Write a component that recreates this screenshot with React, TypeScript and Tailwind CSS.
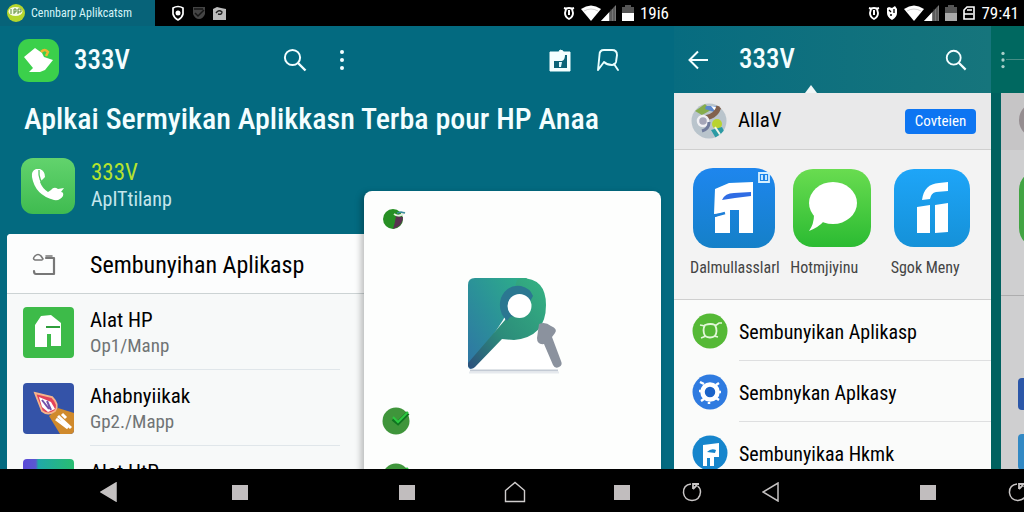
import React from 'react';

type IconProps = { className?: string };

const SearchIcon: React.FC<IconProps> = ({ className }) => (
  <svg
    className={className}
    viewBox="0 0 24 24"
    fill="none"
    stroke="currentColor"
    strokeWidth="2"
  >
    <circle cx="9.5" cy="9.5" r="7.6" />
    <path d="M15 15l7.5 7.5" strokeWidth="2.4" />
  </svg>
);

const DotsIcon: React.FC<IconProps> = ({ className }) => (
  <svg className={className} viewBox="0 0 6 22" fill="currentColor">
    <circle cx="3" cy="3" r="2" />
    <circle cx="3" cy="11" r="2" />
    <circle cx="3" cy="19" r="2" />
  </svg>
);

const SaveIcon: React.FC = () => (
  <svg className="w-6 h-6" viewBox="0 0 24 24">
    <path
      d="M2 4h9l1-2 3 1v1h7v19H2z"
      fill="#f4ffff"
      stroke="#f4ffff"
      strokeLinejoin="round"
    />
    <path d="M6 13h8q3-1 3-6h2v13H6z" fill="#0b6478" />
    <path d="M11 14h3l-1 5h-2z" fill="#e0faff" />
  </svg>
);

const BubbleIcon: React.FC = () => (
  <svg
    className="w-6 h-6"
    viewBox="0 0 24 24"
    fill="none"
    stroke="#eaffff"
    strokeWidth="1.9"
    strokeLinecap="round"
    strokeLinejoin="round"
  >
    <path d="M2 22L3.5 7Q3.500 2 8 2h8q5 0 5 5l-1 7q-1 3-4 3-5 0-8-3L2 22" />
    <path d="M18 16l4 6" />
  </svg>
);

const BackArrow: React.FC = () => (
  <svg
    className="w-5 h-5"
    viewBox="0 0 20 20"
    fill="none"
    stroke="currentColor"
    strokeWidth="2"
  >
    <path d="M20 10H2M10 1.500L1.500 10l8.500 8.500" />
  </svg>
);

const TargetIcon: React.FC = () => (
  <svg className="w-[14px] h-4" viewBox="0 0 14 16">
    <path
      d="M2 3Q7 0 12 3v6q-1 4-5 6-4-2-5-6z"
      fill="none"
      stroke="#fff"
      strokeWidth="1.7"
      strokeLinejoin="round"
    />
    <circle cx="7" cy="8" r="2.500" fill="#fff" />
  </svg>
);

const BadgeIcon: React.FC = () => (
  <svg className="w-3 h-[14px]" viewBox="0 0 12 14">
    <path d="M0 1h12v7q-2 5-6 5T0 8z" fill="#444" />
    <path d="M2 7l3 3 6-6M1 3h9" fill="none" stroke="#161616" strokeWidth="1.5" />
  </svg>
);

const PictureIcon: React.FC = () => (
  <svg className="w-[13px] h-[14px]" viewBox="0 0 13 14">
    <path d="M0 3l4-2 4 1 5 1v11H0z" fill="#bcbcbc" />
    <path
      d="M3 7q3-4 6-1 0 3-4 2"
      fill="none"
      stroke="#222"
      strokeWidth="1.4"
    />
  </svg>
);

const AlarmIcon: React.FC = () => (
  <svg className="w-3 h-4" viewBox="0 0 12 16">
    <path
      d="M1 3l3 1M11 3L8 4M3 4q3-2 6 0l1 4q0 4-4 6-4-2-4-6z"
      fill="none"
      stroke="#fff"
      strokeWidth="1.9"
    />
    <path d="M6 5v5" stroke="#fff" strokeWidth="2" />
  </svg>
);

const BugIcon: React.FC = () => (
  <svg className="w-3 h-4" viewBox="0 0 12 16">
    <path d="M1 3l2-1 3 1 3-2 2 3v4q0 4-5 7Q1 12 1 8z" fill="#fff" />
    <path d="M3 5l2 2M8 4v4M4 10h2" stroke="#000" strokeWidth="1.3" />
  </svg>
);

const WifiIcon: React.FC = () => (
  <svg className="w-5 h-4" viewBox="0 0 20 16">
    <path d="M0 4q10-7 20 0L10 16z" fill="#fff" />
    <path d="M3 6q7-4 14 0" fill="none" stroke="#bbb" strokeWidth=".7" />
  </svg>
);

const SignalIcon: React.FC = () => (
  <svg className="w-[15px] h-4" viewBox="0 0 15 16">
    <path d="M15 0v16H0z" fill="#777" />
    <path d="M8 7.500V16H0z" fill="#fff" />
    <path d="M10 4v12M13 2v14" stroke="#333" strokeWidth=".8" />
  </svg>
);

const BatteryIcon: React.FC<{ low?: boolean }> = ({ low }) => (
  <svg className="w-3 h-4" viewBox="0 0 12 16">
    <path d="M3 0h6v2h3v6H0V2h3z" fill="#555" />
    <path d="M0 8h12v8H0z" fill={low ? '#aaa' : '#fff'} />
  </svg>
);

const CardIcon: React.FC = () => (
  <svg
    className="w-3 h-[14px]"
    viewBox="0 0 12 14"
    fill="none"
    stroke="#fff"
    strokeWidth="1.6"
  >
    <path d="M1 4l3-3h7v12H1zM1 8h9M4 4h5" />
  </svg>
);

const StatusBar: React.FC = () => (
  <div className="grid grid-cols-[674fr_350fr] h-[26px] shrink-0 bg-black text-white text-[17px] leading-[26px]">
    <div className="flex items-center pr-[5px]">
      <div className="flex items-center w-[155px] h-full bg-[#076379] pl-[7px] gap-[6px] text-xs text-[#d5f4f8]">
        <svg className="w-[18px] h-5" viewBox="0 0 18 20">
          <circle cx="9" cy="10" r="9" fill="#b4d62c" />
          <ellipse cx="8.500" cy="8.500" rx="7" ry="4.500" fill="#f6fbe6" />
          <path
            d="M4 6v5M7 11V6h2v3H7M11 11V6h3v3h-3"
            fill="none"
            stroke="#5f8c3a"
          />
        </svg>
        Cennbarp Aplikcatsm
      </div>
      <div className="flex items-center gap-2 ml-4">
        <TargetIcon />
        <BadgeIcon />
        <PictureIcon />
      </div>
      <div className="flex items-center gap-[6px] ml-auto">
        <AlarmIcon />
        <div className="flex">
          <WifiIcon />
          <SignalIcon />
        </div>
        <BatteryIcon />
        19i6
      </div>
    </div>
    <div className="flex items-center justify-end gap-[6px] pr-[5px]">
      <AlarmIcon />
      <BugIcon />
      <div className="flex">
        <WifiIcon />
        <SignalIcon />
      </div>
      <BatteryIcon low />
      <CardIcon />
      79:41
    </div>
  </div>
);

const PhoneTile: React.FC = () => (
  <svg className="w-[54px] h-[56px] shrink-0" viewBox="0 0 54 56">
    <defs>
      <linearGradient id="phone" x2="0" y2="1">
        <stop stopColor="#62d36d" />
        <stop offset="1" stopColor="#3fbb50" />
      </linearGradient>
    </defs>
    <rect width="54" height="56" rx="12" fill="url(#phone)" />
    <path
      d="M15 11q-5 2-4 8 3 18 22 23 6 1 9-4 1-4-2-4l3-4-6 1q-4-3-7 1l-3 2q-6-4-8-10l5-5q0-6-5-8z"
      fill="#fff"
    />
    <path d="M18 12q-1 10 7 18" fill="none" stroke="#4fc65e" strokeWidth="1.3" />
  </svg>
);

const HouseTile: React.FC = () => (
  <svg className="w-[51px] h-[51px] shrink-0" viewBox="0 0 51 51">
    <rect width="51" height="51" rx="4" fill="#3dbb49" />
    <path d="M12 18L18 9l10-1 10 8v23H28V27h-4v13H12z" fill="#fff" />
    <path d="M23 19h14v2H23z" fill="#2f9e3c" />
  </svg>
);

const BrushTile: React.FC = () => (
  <svg className="w-[51px] h-[51px] shrink-0" viewBox="0 0 51 51">
    <rect width="51" height="51" rx="4" fill="#3453a8" />
    <path d="M26 33l9-8 16 5v17q0 4-4 4H37z" fill="#d08a2c" />
    <path
      d="M12 10l17 4q8 8 3 14-7 5-13 0z"
      fill="#e3425a"
      stroke="#f5b48c"
      strokeWidth="1.8"
    />
    <path d="M16 14l12 5 4 7-7 3-6-5z" fill="#fff" />
    <path d="M19 17l7 9M24 18l4 9" stroke="#7450a8" strokeWidth="2" />
    <path d="M35 33l13 12M33 36l12 9M39 31l4 4" stroke="#fff" strokeWidth="3" />
  </svg>
);

const SpectrumTile: React.FC = () => (
  <svg className="w-[51px] h-[51px] shrink-0" viewBox="0 0 51 51">
    <defs>
      <linearGradient id="spectrum">
        <stop stopColor="#5a48d8" />
        <stop offset=".25" stopColor="#5a58d0" />
        <stop offset=".3" stopColor="#20a8a8" />
        <stop offset="1" stopColor="#28bd70" />
      </linearGradient>
    </defs>
    <rect width="51" height="51" rx="4" fill="url(#spectrum)" />
  </svg>
);

const apps = [
  { name: 'Alat HP', detail: 'Op1/Manp', icon: <HouseTile /> },
  { name: 'Ahabnyiikak', detail: 'Gp2./Mapp', icon: <BrushTile /> },
  { name: 'Alat HtP', detail: null, icon: <SpectrumTile /> },
];

const AppList: React.FC = () => (
  <div className="grow ml-[7px] bg-[#f7f9f9] rounded-tl text-black">
    <div className="flex items-center h-[60px] pt-[2px] pl-6 bg-[#fcfdfd] border-b border-[#ccd3d4] rounded-tl">
      <svg
        className="w-[26px] h-6"
        viewBox="0 0 26 24"
        fill="none"
        stroke="#777"
        strokeWidth="2.2"
        strokeLinejoin="round"
        strokeLinecap="round"
      >
        <path d="M3 18q0 3 2 3h18V5h-8" />
        <path d="M11 7H4Q1 6 4 3q3-3 6 0l2 3M15 3h6" strokeWidth="1.6" />
      </svg>
      <h2 className="ml-[33px] text-2xl">Sembunyihan Aplikasp</h2>
    </div>
    <ul>
      {apps.map((app) => (
        <li key={app.name} className="flex items-center h-[76px] pl-4">
          {app.icon}
          <div className="grow h-full ml-4 mr-6 pt-[14px] border-b border-[#e0e6ea]">
            <div className="text-[21px] leading-[25px]">{app.name}</div>
            {app.detail && (
              <div className="text-[19px] leading-[25px] text-[#707475]">
                {app.detail}
              </div>
            )}
          </div>
        </li>
      ))}
    </ul>
  </div>
);

const KeyLogo: React.FC = () => (
  <svg className="w-[100px] h-[100px]" viewBox="0 0 100 100">
    <defs>
      <linearGradient id="sheet" x1="1" y1="0" x2="0" y2="1">
        <stop stopColor="#2eb088" />
        <stop offset=".5" stopColor="#2b9298" />
        <stop offset="1" stopColor="#2f74a5" />
      </linearGradient>
      <linearGradient id="key" x1="1" y1="0" x2="0" y2="1">
        <stop stopColor="#35b383" />
        <stop offset=".6" stopColor="#2c8c7a" />
        <stop offset="1" stopColor="#2c4f7c" />
      </linearGradient>
    </defs>
    <path d="M5 94.500h88" stroke="#c3cad4" strokeWidth="2" />
    <path d="M4 96.500h90" stroke="#e6e9ee" strokeWidth="2" />
    <path d="M8 93l30-29h38l17 29z" fill="#fff" />
    <path d="M10 2h52L38 44 6 93q-3 0-3-4V9q0-7 7-7z" fill="url(#sheet)" />
    <path
      d="M52 4l4-2q25 0 25 27 0 32-32 35l-12-1L10 91q-4 4-7-1l0-3 37-43z"
      fill="url(#key)"
    />
    <path
      d="M42 45q-10-10-6-23 6-14 20-12 9 2 12 10l-10 18-13 3z"
      fill="#2b7791"
    />
    <circle cx="54.500" cy="30" r="12" fill="#fff" />
    <path
      d="M74 48q6-3 12 2 7 3 4 7l-3 4 9 24q2 4-2 6-4 2-6-2l-9-21q-7 1-7-6z"
      fill="#8b929e"
    />
  </svg>
);

const CheckDot: React.FC = () => (
  <svg className="w-[28px] h-[28px]" viewBox="0 0 28 28">
    <circle cx="14" cy="14" r="13.500" fill="#3f953b" />
    <path d="M11 12l5 4L26 6" fill="none" stroke="#0f7420" strokeWidth="4" />
    <path d="M11 10l5 5L26 5" fill="none" stroke="#2cc840" strokeWidth="2" />
  </svg>
);

const KeyCard: React.FC = () => (
  <div className="mt-[47px] mr-[13px] rounded-t-lg bg-[#fdfefd] pl-[18px] pt-[17px] shadow-[-3px_2px_6px_rgba(0,0,0,0.25)] z-10">
    <svg className="w-6 h-[22px]" viewBox="0 0 24 22">
      <circle cx="11" cy="11" r="10" fill="#278f24" />
      <path d="M21 9q0 9-10 12Q13 15 14 8z" fill="#5a3150" />
      <path d="M12 6q5 4 11-2" fill="none" stroke="#e6f0e0" strokeWidth="1.8" />
      <path d="M15 5l4-1 4 1" fill="none" stroke="#3b8b9c" strokeWidth="1.5" />
    </svg>
    <div className="flex justify-center mt-[46px] pr-[14px]">
      <KeyLogo />
    </div>
    <div className="flex flex-col gap-7 mt-[31px]">
      <CheckDot />
      <CheckDot />
    </div>
  </div>
);

const HiderPanel: React.FC = () => (
  <section className="flex flex-col grow-[674] basis-0 min-w-0">
    <header className="flex items-center h-[68px] shrink-0 pl-[18px] pr-[54px]">
      <svg className="w-[41px] h-[43px]" viewBox="0 0 41 43">
        <rect width="41" height="43" rx="11" fill="#3bd04b" />
        <path
          d="M23 13q4-4 7 0l-2 4"
          fill="none"
          stroke="#eeb531"
          strokeWidth="2.500"
        />
        <path d="M6 18L17 9l7 5 2 4 9 3-8 10-5 2H11l4-4z" fill="#fff" />
      </svg>
      <h1 className="ml-[15px] text-[27px] font-medium">333V</h1>
      <div className="flex items-center gap-8 ml-auto mr-[203px]">
        <button aria-label="Search">
          <SearchIcon className="w-6 h-6" />
        </button>
        <button aria-label="More">
          <DotsIcon className="w-[6px] h-[22px]" />
        </button>
      </div>
      <div className="flex gap-6">
        <button aria-label="Save">
          <SaveIcon />
        </button>
        <button aria-label="Comments">
          <BubbleIcon />
        </button>
      </div>
    </header>
    <h2 className="h-[50px] shrink-0 pl-6 text-[30px] leading-[50px] font-medium whitespace-nowrap">
      Aplkai Sermyikan Aplikkasn Terba pour HP Anaa
    </h2>
    <div className="grid grid-cols-[364fr_310fr] grow">
      <div className="flex flex-col">
        <div className="flex h-[90px] pl-[21px] pt-[14px] gap-4">
          <PhoneTile />
          <div>
            <div className="text-[23px] leading-[30px] text-[#b5e32e]">333V</div>
            <div className="text-xl leading-[22px] text-[#c6e6ec]">
              ApITtilanp
            </div>
          </div>
        </div>
        <AppList />
      </div>
      <KeyCard />
    </div>
  </section>
);

const shortcuts = [
  {
    name: 'Dalmullasslarl',
    icon: (
      <svg className="w-[82px] h-[80px]" viewBox="0 0 82 80">
        <defs>
          <linearGradient id="blue" x2="0" y2="1">
            <stop stopColor="#1e86ee" />
            <stop offset="1" stopColor="#1580c8" />
          </linearGradient>
        </defs>
        <rect width="82" height="80" rx="20" fill="url(#blue)" />
        <path
          d="M22 21l14-6 24-1v51H46V42h-9v23H22V49l10-4-11 1z"
          fill="#fff"
        />
        <path d="M29 32q3-7 12-7l17-1v4l-16 2z" fill="#2f6ce4" />
        <path d="M21 48l11-3" stroke="#1d7fd8" strokeWidth="2.500" />
        <path
          d="M66 5h10v9H66zM69 7v5M73 7v5"
          fill="none"
          stroke="#d7f0ff"
          strokeWidth="1.8"
        />
      </svg>
    ),
  },
  {
    name: 'Hotmjiyinu',
    icon: (
      <svg className="w-[78px] h-[80px]" viewBox="0 0 78 80">
        <defs>
          <linearGradient id="chat" x2="0" y2="1">
            <stop stopColor="#69dc50" />
            <stop offset="1" stopColor="#2bbb32" />
          </linearGradient>
        </defs>
        <rect y="1" width="78" height="78" rx="20" fill="url(#chat)" />
        <ellipse cx="40" cy="35" rx="24" ry="21" fill="#fff" />
        <path d="M21 47q0 9-5 16 10-4 15-10z" fill="#fff" />
      </svg>
    ),
  },
  {
    name: 'Sgok Meny',
    icon: (
      <svg className="w-[76px] h-[80px]" viewBox="0 0 76 80">
        <defs>
          <linearGradient id="sky" x2="0" y2="1">
            <stop stopColor="#1ea5f8" />
            <stop offset="1" stopColor="#1591d8" />
          </linearGradient>
        </defs>
        <rect y="1" width="76" height="78" rx="20" fill="url(#sky)" />
        <path
          d="M28 32q2-16 17-17l9-1v9l-12 1q-5 1-6 7zM23 39l13-2v28H23zM41 37l13-2v29l-13 1z"
          fill="#fff"
        />
      </svg>
    ),
  },
];

const menu = [
  {
    name: 'Sembunyikan Aplikasp',
    icon: (
      <svg className="w-9 h-9" viewBox="0 0 36 36">
        <circle cx="18" cy="18" r="17.500" fill="#55b936" />
        <path
          d="M13 12q6-2 10 0 3 6 0 11-5 3-10 0-3-6 0-11z"
          fill="none"
          stroke="#e2f7d8"
          strokeWidth="1.8"
        />
        <path
          d="M8 12l5 1M23 13l4-3 3 0M9 25l5-2M22 23l4 1"
          fill="none"
          stroke="#e2f7d8"
          strokeWidth="1.6"
        />
      </svg>
    ),
  },
  {
    name: 'Sembnykan Aplkasy',
    icon: (
      <svg className="w-9 h-9" viewBox="0 0 36 36">
        <circle cx="18" cy="18" r="17.500" fill="#2f7be0" />
        <path
          d="M8 8l4 2M27 9l-3 2M7 17h3M29 18h-3M9 27l3-2M27 26l-3-2M17 28v2"
          stroke="#fff"
          strokeWidth="2.500"
        />
        <circle
          cx="18"
          cy="18"
          r="7.500"
          fill="#1c63c8"
          stroke="#fff"
          strokeWidth="4.500"
        />
      </svg>
    ),
  },
  {
    name: 'Sembunyikaa Hkmk',
    icon: (
      <svg className="w-9 h-9" viewBox="0 0 36 36">
        <circle cx="18" cy="18" r="17.500" fill="#1685cc" />
        <path d="M11 10l16-2v14h-5v9h-4v-8h-3v8h-4z" fill="#fff" />
        <path d="M15 17q4-4 9-2l-1 3z" fill="#1685cc" />
      </svg>
    ),
  },
];

const Avatar: React.FC = () => (
  <svg className="w-9 h-9" viewBox="0 0 36 36">
    <defs>
      <clipPath id="avatar">
        <circle cx="18" cy="18" r="17.500" />
      </clipPath>
    </defs>
    <g clipPath="url(#avatar)">
      <rect width="36" height="36" fill="#b9c4cc" />
      <path d="M4 8L14 1l6 6-9 5z" fill="#86ad4c" />
      <path d="M15 3h12l-4 6-9-3z" fill="#5c88cc" />
      <path d="M20 3l6 1-2 4z" fill="#fff" />
      <path d="M28 3q-2 10-14 12" fill="none" stroke="#81614e" strokeWidth="5" />
      <circle
        cx="12"
        cy="18"
        r="5"
        fill="#a5a6b8"
        stroke="#f0f0f4"
        strokeWidth="2.500"
      />
      <path d="M18 19q0 7-7 9" fill="none" stroke="#707b9c" strokeWidth="3" />
      <circle cx="26" cy="21" r="5" fill="#b9d331" />
      <path d="M20 27l11-3 3 6-8 7z" fill="#2b9aa4" />
      <path d="M24 24l6 9" stroke="#f1f6e8" strokeWidth="2" />
    </g>
  </svg>
);

const StorePanel: React.FC = () => (
  <section className="flex flex-col grow-[317] basis-0 min-w-0">
    <header className="relative flex items-center h-[67px] shrink-0 pl-[14px] pr-6 bg-linear-to-r from-[#076c80] to-[#16757c]">
      <button aria-label="Back">
        <BackArrow />
      </button>
      <h1 className="ml-[31px] text-[27px] font-medium">333V</h1>
      <button aria-label="Search" className="ml-auto">
        <SearchIcon className="w-[22px] h-[22px]" />
      </button>
      <svg
        className="absolute bottom-0 left-[131px] w-3 h-2"
        viewBox="0 0 12 8"
      >
        <path d="M6 0l6 8H0z" fill="#f0f7f7" />
      </svg>
    </header>
    <div className="grow bg-[#fafbfa] text-black">
      <div className="flex items-center h-[57px] pl-[17px] pr-[15px] bg-[#e9e9ea] border-b border-[#cfcfcf]">
        <Avatar />
        <div className="ml-[11px] text-[21px]">AllaV</div>
        <button className="ml-auto w-[71px] h-[25px] rounded-sm bg-[#0d75f2] text-[15px] text-white">
          Covteien
        </button>
      </div>
      <ul className="grid grid-cols-3 h-[150px] pl-4 pt-[18px] bg-[#f3f3f3] border-b border-[#cfcfcf]">
        {shortcuts.map((shortcut) => (
          <li key={shortcut.name} className="flex flex-col">
            <div className="pl-[3px]">{shortcut.icon}</div>
            <div className="mt-[10px] text-base leading-5 text-[#444]">
              {shortcut.name}
            </div>
          </li>
        ))}
      </ul>
      <ul>
        {menu.map((item) => (
          <li key={item.name} className="flex items-center h-[61px] pl-[18px]">
            {item.icon}
            <div className="flex items-center grow h-full ml-[11px] pt-[3px] border-b border-[#dedfe0] text-xl">
              {item.name}
            </div>
          </li>
        ))}
      </ul>
    </div>
  </section>
);

// Next screen, only its left edge is in view
const PeekPanel: React.FC = () => (
  <section className="flex flex-col grow-[33] basis-0 min-w-0 overflow-hidden bg-[#00615f]">
    <header className="flex items-center h-[67px] shrink-0 pl-[9px] bg-[#006860] text-[#a9cfc9]">
      <button aria-label="More">
        <DotsIcon className="w-[6px] h-[18px]" />
      </button>
      <div className="grow h-px bg-[#468d85]" />
    </header>
    <div className="grow ml-[10px] bg-[#cfcfd0]">
      <div className="h-[57px] pt-[9px] pl-[18px] bg-[#c6c5c6]">
        <div className="w-9 h-9 rounded-full bg-[#958d90]" />
      </div>
      <div className="h-[146px] pt-5 pl-[18px] border-b border-[#adadae]">
        <div className="w-[78px] h-[78px] rounded-[20px] bg-[#42a443]" />
      </div>
      <div className="flex flex-col gap-6 pt-[82px] pl-[17px]">
        <div className="w-9 h-8 rounded-sm bg-[#2b57a8]" />
        <div className="w-9 h-9 rounded-sm bg-[#3289c4]" />
      </div>
    </div>
  </section>
);

const BackTriangle: React.FC<{ outline?: boolean }> = ({ outline }) => (
  <svg className="w-[18px] h-5" viewBox="0 0 18 20">
    <path
      d="M16 1v18L1 10z"
      fill={outline ? 'none' : '#c4c1c1'}
      stroke="#c4c1c1"
      strokeWidth="1.500"
    />
  </svg>
);

const Square: React.FC = () => <div className="w-4 h-[15px] bg-[#c1bdbe]" />;

const Reload: React.FC = () => (
  <svg
    className="w-5 h-5"
    viewBox="0 0 20 20"
    fill="none"
    stroke="#c9c6c6"
    strokeWidth="1.500"
  >
    <path d="M9 2Q1 3 1.500 11q1 7 8.500 7.500Q18 18 18.500 10q0-4-3-6" />
    <path d="M11 7V2h6M11 7l4-4" strokeWidth="1.800" />
  </svg>
);

const NavBar: React.FC = () => (
  <nav className="grid grid-cols-[340fr_330fr_354fr] items-center h-[43px] pt-[3px] shrink-0 bg-black overflow-hidden">
    <div className="flex items-center justify-between pl-[100px] pr-[92px]">
      <button aria-label="Back">
        <BackTriangle />
      </button>
      <button aria-label="Recent apps">
        <Square />
      </button>
    </div>
    <div className="flex items-center justify-between pl-[59px] pr-10">
      <button aria-label="Recent apps">
        <Square />
      </button>
      <button aria-label="Home">
        <svg
          className="w-[22px] h-[22px]"
          viewBox="0 0 22 22"
          fill="none"
          stroke="#d0cdcd"
          strokeWidth="1.400"
        >
          <path d="M1.500 9.500L11 1.500l9.500 8v11h-19z" />
        </svg>
      </button>
      <button aria-label="Recent apps">
        <Square />
      </button>
    </div>
    <div className="flex items-center justify-between pl-3 -mr-1">
      <div className="flex items-center gap-[60px]">
        <button aria-label="Reload">
          <Reload />
        </button>
        <button aria-label="Back">
          <BackTriangle outline />
        </button>
      </div>
      <div className="flex items-center gap-[72px]">
        <button aria-label="Recent apps">
          <Square />
        </button>
        <button aria-label="Reload">
          <Reload />
        </button>
      </div>
    </div>
  </nav>
);

const App: React.FC = () => (
  <div className="flex flex-col h-screen overflow-hidden bg-[#036a80] text-[#f4feff] font-['Roboto_Condensed','Roboto',sans-serif]">
    <StatusBar />
    <main className="flex grow min-h-0 overflow-hidden">
      <HiderPanel />
      <StorePanel />
      <PeekPanel />
    </main>
    <NavBar />
  </div>
);

export default App;
